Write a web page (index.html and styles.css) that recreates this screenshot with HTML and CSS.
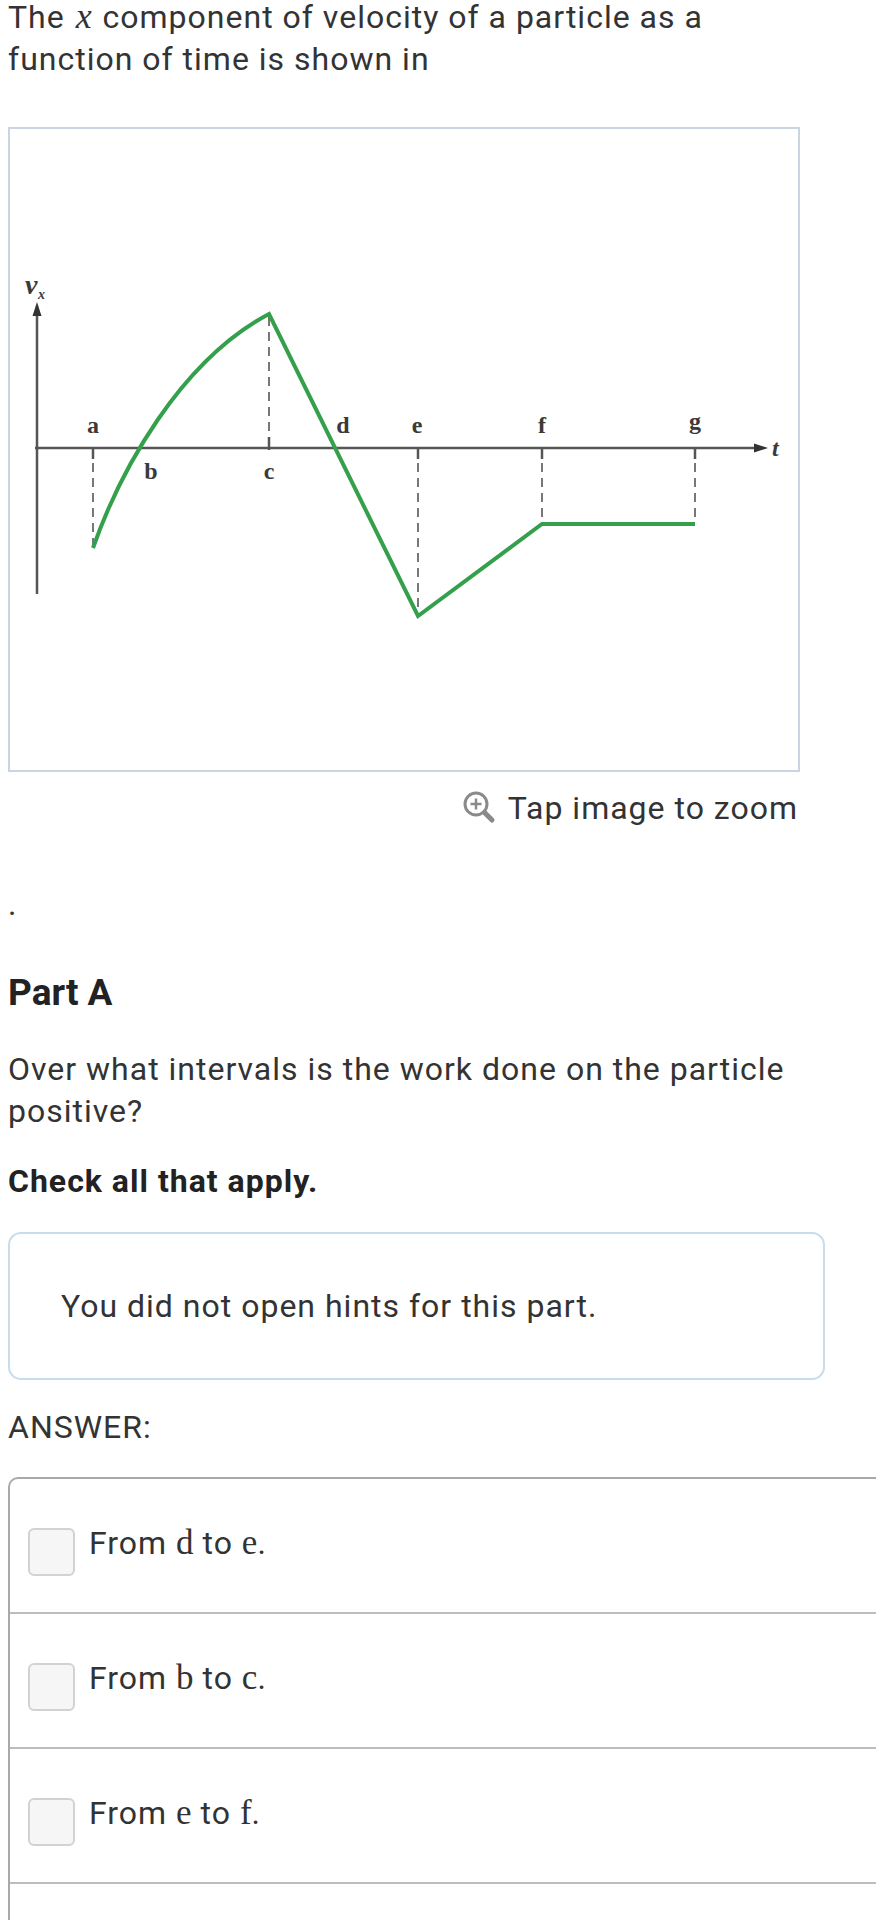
FILE: index.html
```html
<!DOCTYPE html>
<html lang="en">
<head>
<meta charset="utf-8">
<title>Part A</title>
<link rel="stylesheet" href="styles.css">
</head>
<body>
<div class="page">
  <p class="intro">The <span class="mathi">x</span> component of velocity of a particle as a function of time is shown in</p>

  <div class="figure">
    <svg class="graph" viewBox="10 128 788 641" width="788" height="641">
      <g stroke="#555" stroke-width="2.5" fill="none">
        <line x1="37" y1="312" x2="37" y2="593"/>
        <line x1="35" y1="447" x2="757" y2="447"/>
      </g>
      <polygon points="37,301 32.5,315 41.5,315" fill="#333"/>
      <polygon points="768,447 754,442.5 754,451.5" fill="#333"/>
      <g stroke="#555" stroke-width="2.5">
        <line x1="93" y1="447" x2="93" y2="458"/>
        <line x1="269" y1="436" x2="269" y2="449"/>
        <line x1="418" y1="447" x2="418" y2="458"/>
        <line x1="542" y1="447" x2="542" y2="458"/>
        <line x1="695" y1="447" x2="695" y2="458"/>
      </g>
      <g stroke="#777" stroke-width="2" stroke-dasharray="9 6" fill="none">
        <line x1="93" y1="462" x2="93" y2="547"/>
        <line x1="269" y1="316" x2="269" y2="434"/>
        <line x1="418" y1="462" x2="418" y2="613"/>
        <line x1="542" y1="462" x2="542" y2="521"/>
        <line x1="695" y1="462" x2="695" y2="521"/>
      </g>
      <path d="M93 547 C120 470 180 360 269 313 L418 615 L542 523 L695 523" fill="none" stroke="#34a04c" stroke-width="4" stroke-linejoin="miter"/>
      <g class="lbl">
        <text x="93" y="432">a</text>
        <text x="151" y="478">b</text>
        <text x="269" y="478">c</text>
        <text x="343" y="432">d</text>
        <text x="417" y="432">e</text>
        <text x="542" y="432">f</text>
        <text x="695" y="428">g</text>
      </g>
      <text class="lbl-i" x="772" y="455">t</text>
      <text class="lbl-v" x="25" y="293">v</text>
      <text class="lbl-sub" x="38" y="298">x</text>
    </svg>
  </div>

  <div class="caption">
    <svg class="zoom-icon" viewBox="0 0 34 36" width="34" height="36">
      <circle cx="14" cy="14" r="11" fill="none" stroke="#8a8a8a" stroke-width="3"/>
      <path d="M14 8.5 V19.5 M8.5 14 H19.5" stroke="#8a8a8a" stroke-width="2.5"/>
      <path d="M22.5 22.5 L30 30" stroke="#8a8a8a" stroke-width="5" stroke-linecap="round"/>
    </svg>
    <span>Tap image to zoom</span>
  </div>

  <p class="dot">.</p>

  <h2 class="part">Part A</h2>

  <p class="question">Over what intervals is the work done on the particle positive?</p>

  <p class="instr">Check all that apply.</p>

  <div class="hint">You did not open hints for this part.</div>

  <p class="answer-label">ANSWER:</p>

  <div class="answers">
    <div class="option"><span class="check"></span><span class="opt-text">From <span class="m">d</span> to <span class="m">e</span>.</span></div>
    <div class="option"><span class="check"></span><span class="opt-text">From <span class="m">b</span> to <span class="m">c</span>.</span></div>
    <div class="option"><span class="check"></span><span class="opt-text">From <span class="m">e</span> to <span class="m">f</span>.</span></div>
    <div class="option"><span class="check"></span></div>
  </div>
</div>
</body>
</html>
```
FILE: styles.css
```css
html, body {
  margin: 0;
  padding: 0;
  background: #ffffff;
}
body {
  overflow-x: hidden;
  font-family: Roboto, "Noto Sans", "Liberation Sans", sans-serif;
  color: #333333;
  font-size: 32px;
  line-height: 42px;
  letter-spacing: 1px;
}
.page {
  padding-left: 8px;
  overflow: hidden;
}
p, h2 {
  margin: 0;
}
.intro {
  margin-top: -5px;
  width: 760px;
}
.mathi {
  font-family: "Liberation Serif", "DejaVu Serif", serif;
  font-style: italic;
  font-size: 36px;
  letter-spacing: 0;
  padding: 0 2px;
}
.figure {
  margin-top: 47px;
  width: 792px;
  height: 645px;
  box-sizing: border-box;
  border: 2px solid #c9d5e2;
}
.graph {
  display: block;
  letter-spacing: 0;
}
.lbl text {
  font-family: "Liberation Serif", "DejaVu Serif", serif;
  font-weight: bold;
  font-size: 24px;
  fill: #3a3a3a;
  text-anchor: middle;
}
.lbl-i {
  font-family: "Liberation Serif", "DejaVu Serif", serif;
  font-style: italic;
  font-weight: bold;
  font-size: 24px;
  fill: #3a3a3a;
}
.lbl-v {
  font-family: "Liberation Serif", "DejaVu Serif", serif;
  font-style: italic;
  font-weight: bold;
  font-size: 28px;
  fill: #3a3a3a;
}
.lbl-sub {
  font-family: "Liberation Serif", "DejaVu Serif", serif;
  font-style: italic;
  font-weight: bold;
  font-size: 14px;
  fill: #3a3a3a;
}
.caption {
  margin-top: 15px;
  width: 790px;
  display: flex;
  justify-content: flex-end;
  align-items: center;
  gap: 12px;
  height: 42px;
}
.zoom-icon {
  display: block;
}
.dot {
  margin-top: 54px;
}
.part {
  margin-top: 46px;
  font-size: 37px;
  line-height: 44px;
  font-weight: bold;
  letter-spacing: 0;
  color: #222222;
}
.question {
  margin-top: 33px;
  width: 820px;
}
.instr {
  margin-top: 28px;
  font-weight: bold;
  color: #222222;
}
.hint {
  margin-top: 30px;
  width: 817px;
  box-sizing: border-box;
  border: 2px solid #c8dcec;
  border-radius: 13px;
  padding: 51px 51px;
}
.answer-label {
  margin-top: 26px;
}
.answers {
  margin-top: 29px;
  width: 900px;
  border: 2px solid #a9a9a9;
  border-right: none;
  border-bottom: none;
  border-top-left-radius: 10px;
}
.option {
  display: flex;
  align-items: flex-start;
  gap: 14px;
  height: 42px;
  padding: 43px 0 48px 18px;
  border-bottom: 2px solid #bdbdbd;
}
.opt-text {
  display: block;
  height: 42px;
  line-height: 42px;
  white-space: nowrap;
}
.check {
  display: block;
  flex: none;
  margin-top: 6px;
  width: 47px;
  height: 48px;
  box-sizing: border-box;
  border: 2px solid #d2d2d2;
  border-radius: 6px;
  background: #f6f6f6;
}
.m {
  font-family: "Liberation Serif", "DejaVu Serif", serif;
  font-size: 35px;
  line-height: 0;
  letter-spacing: 0;
}
```
